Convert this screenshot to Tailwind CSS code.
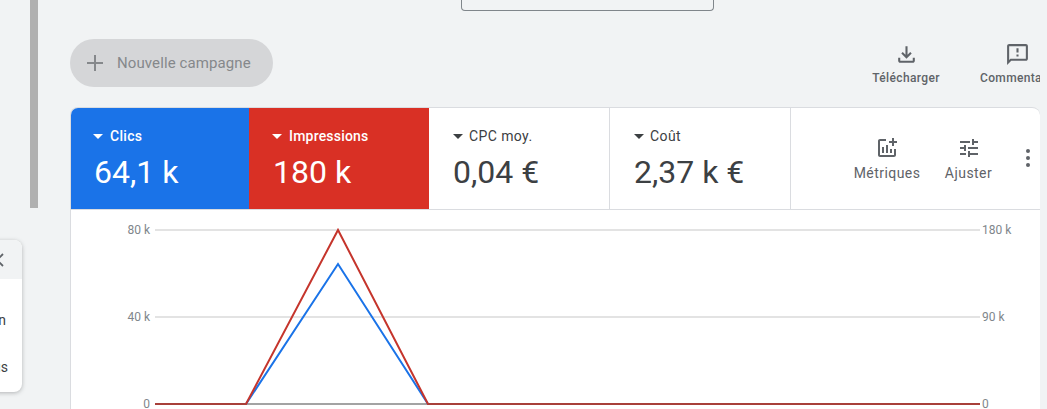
<!DOCTYPE html>
<html lang="fr">
<head>
  <meta charset="UTF-8" />
  <title>Campagnes</title>
  <script src="https://cdn.jsdelivr.net/npm/@tailwindcss/browser@4"></script>
</head>
<body class="bg-[#f1f3f4] font-['Roboto',sans-serif] text-[#3c4043]">
  <div class="relative w-[1047px] h-[409px] overflow-hidden">

    <!-- page scrollbar -->
    <div class="absolute left-[30px] top-0 w-[8px] h-[208px] bg-[#b0b0b0]"></div>

    <!-- side popover, cut by the window -->
    <div class="absolute left-[-100px] top-[240px] w-[122px] h-[152px] bg-white rounded-lg shadow-[0_1px_4px_rgba(60,64,67,0.35)] overflow-hidden">
      <div class="h-[39px] bg-[#f1f3f4] flex items-center justify-end pr-[18px]">
        <svg class="w-[14px] h-[14px] shrink-0" viewBox="0 0 14 14" fill="none" stroke="#5f6368" stroke-width="1.8"><path d="M1 1l12 12M13 1L1 13" /></svg>
      </div>
      <div class="text-[14px] text-[#3c4043] text-right pr-[16px] pt-[31px]">n</div>
      <div class="text-[14px] text-[#3c4043] text-right pr-[14px] pt-[26px]">us</div>
    </div>

    <main class="ml-[71px] w-[969px] flex flex-col">
      <div class="ml-[390px] w-[253px] h-[11px] border border-t-0 border-[#80868b] rounded-b-[4px]"></div>

      <!-- toolbar -->
      <div class="h-[96px] flex items-start justify-between">
        <button class="mt-[28px] -ml-px w-[203px] h-[48px] rounded-full bg-[#d5d6d8] flex items-center pl-[14px] text-[#85888b]">
          <svg class="w-[22px] h-[22px]" viewBox="0 0 22 22" fill="#85888b"><path d="M10 3h2v7h7v2h-7v7h-2v-7H3v-2h7z" /></svg>
          <span class="ml-[11px] text-[15px] tracking-[0.1px]">Nouvelle campagne</span>
        </button>
        <div class="flex text-[12px] font-medium text-[#5f6368] mt-[31px]">
          <div class="w-[68px] flex flex-col items-center">
            <svg class="w-[25px] h-[25px]" viewBox="0 0 24 24" fill="#5f6368"><path d="M18 15v3H6v-3H4v3c0 1.100.9 2 2 2h12c1.100 0 2-.9 2-2v-3h-2zm-1-4-1.410-1.410L13 12.170V4h-2v8.170L8.410 9.590 7 11l5 5 5-5z" /></svg>
            <span class="mt-[2px] leading-[18px] whitespace-nowrap tracking-[0.35px]">Télécharger</span>
          </div>
          <div class="w-[60px] ml-[40px] overflow-hidden flex flex-col items-start">
            <svg class="w-[25px] h-[25px] ml-[25px]" viewBox="0 0 24 24" fill="#5f6368"><path d="M20 2H4c-1.100 0-2 .9-2 2v18l4-4h14c1.100 0 2-.9 2-2V4c0-1.100-.9-2-2-2zm0 14H5.170L4 17.170V4h16v12zm-9-4h2v2h-2zm0-6h2v4h-2z" /></svg>
            <span class="mt-[2px] leading-[18px] whitespace-nowrap tracking-[0.35px]">Commentaires</span>
          </div>
        </div>
      </div>

      <!-- card -->
      <section class="-ml-px w-[970px] bg-white rounded-t-lg overflow-hidden border-l border-t border-[#dadce0]">
        <div class="flex h-[102px] border-b border-[#dadce0]">
          <div class="w-[178px] shrink-0 bg-[#1a73e8] text-white pl-[22px] pt-[19px]">
            <div class="flex items-center text-[14px] font-medium leading-[18px] tracking-[0.3px]">
              <span class="w-0 h-0 border-x-[5px] border-x-transparent border-t-[5px] border-t-white mr-[7px]"></span>Clics
            </div>
            <div class="text-[32px] leading-[40px] mt-[7px] ml-px">64,1 k</div>
          </div>
          <div class="w-[180px] shrink-0 bg-[#d93025] text-white pl-[23px] pt-[19px]">
            <div class="flex items-center text-[14px] font-medium leading-[18px] tracking-[0.2px]">
              <span class="w-0 h-0 border-x-[5px] border-x-transparent border-t-[5px] border-t-white mr-[7px]"></span>Impressions
            </div>
            <div class="text-[32px] leading-[40px] mt-[7px] ml-px">180 k</div>
          </div>
          <div class="w-[181px] shrink-0 border-r border-[#dadce0] pl-[24px] pt-[19px]">
            <div class="flex items-center text-[14px] leading-[18px] tracking-[0.4px]">
              <span class="w-0 h-0 border-x-[5px] border-x-transparent border-t-[5px] border-t-[#3c4043] mr-[6px]"></span>CPC moy.
            </div>
            <div class="text-[32px] leading-[40px] mt-[7px]">0,04 €</div>
          </div>
          <div class="w-[181px] shrink-0 border-r border-[#dadce0] pl-[24px] pt-[19px]">
            <div class="flex items-center text-[14px] leading-[18px] tracking-[0.4px]">
              <span class="w-0 h-0 border-x-[5px] border-x-transparent border-t-[5px] border-t-[#3c4043] mr-[6px]"></span>Coût
            </div>
            <div class="text-[32px] leading-[40px] mt-[7px]">2,37 k €</div>
          </div>
          <div class="flex-1 flex text-[14px] text-[#5f6368] tracking-[0.45px]">
            <div class="ml-[62px] w-[68px] flex flex-col items-center pt-[28px]">
              <svg class="w-[24px] h-[24px]" viewBox="0 0 24 24" fill="#5f6368"><path d="M22 5v2h-3v3h-2V7h-3V5h3V2h2v3h3zm-3 14H5V5h6V3H5c-1.100 0-2 .9-2 2v14c0 1.100.9 2 2 2h14c1.100 0 2-.9 2-2v-6h-2v6zm-4-6v4h2v-4h-2zm-4 4h2V9h-2v8zm-2 0v-6H7v6h2z" /></svg>
              <span class="mt-[3px] leading-[20px]">Métriques</span>
            </div>
            <div class="ml-[24px] w-[47px] flex flex-col items-center pt-[28px]">
              <svg class="w-[24px] h-[24px]" viewBox="0 0 24 24" fill="#5f6368"><path d="M3 17v2h6v-2H3zM3 5v2h10V5H3zm10 16v-2h8v-2h-8v-2h-2v6h2zM7 9v2H3v2h4v2h2V9H7zm14 4v-2H11v2h10zm-6-4h2V7h4V5h-4V3h-2v6z" /></svg>
              <span class="mt-[3px] leading-[20px]">Ajuster</span>
            </div>
            <svg class="ml-[24px] mt-[38px] w-[24px] h-[24px]" viewBox="0 0 24 24" fill="#5f6368"><circle cx="12" cy="5" r="2" /><circle cx="12" cy="12" r="2" /><circle cx="12" cy="19" r="2" /></svg>
          </div>
        </div>

        <!-- chart -->
        <svg class="block w-[969px] h-[199px]" viewBox="0 0 969 199">
          <g stroke="#e3e3e3" stroke-width="2">
            <path d="M84 20H909M84 107H909" />
          </g>
          <g font-size="12" fill="#80868b" font-family="Roboto, sans-serif">
            <text x="79" y="24" text-anchor="end">80 k</text>
            <text x="79" y="111" text-anchor="end">40 k</text>
            <text x="79" y="198" text-anchor="end">0</text>
            <text x="911" y="24">180 k</text>
            <text x="911" y="111">90 k</text>
            <text x="911" y="198">0</text>
          </g>
          <path d="M84 194H909" stroke="#a3a3a3" stroke-width="2" />
          <path d="M84 194H175L267 54L357 194H909" fill="none" stroke="#1a73e8" stroke-width="2" />
          <path d="M84 194H175L267 20L357 194H909" fill="none" stroke="#c5352c" stroke-width="2" />
          <path d="M84 194H175M357 194H909" fill="none" stroke="#a8403a" stroke-width="2" />
        </svg>
      </section>
    </main>
  </div>
</body>
</html>
